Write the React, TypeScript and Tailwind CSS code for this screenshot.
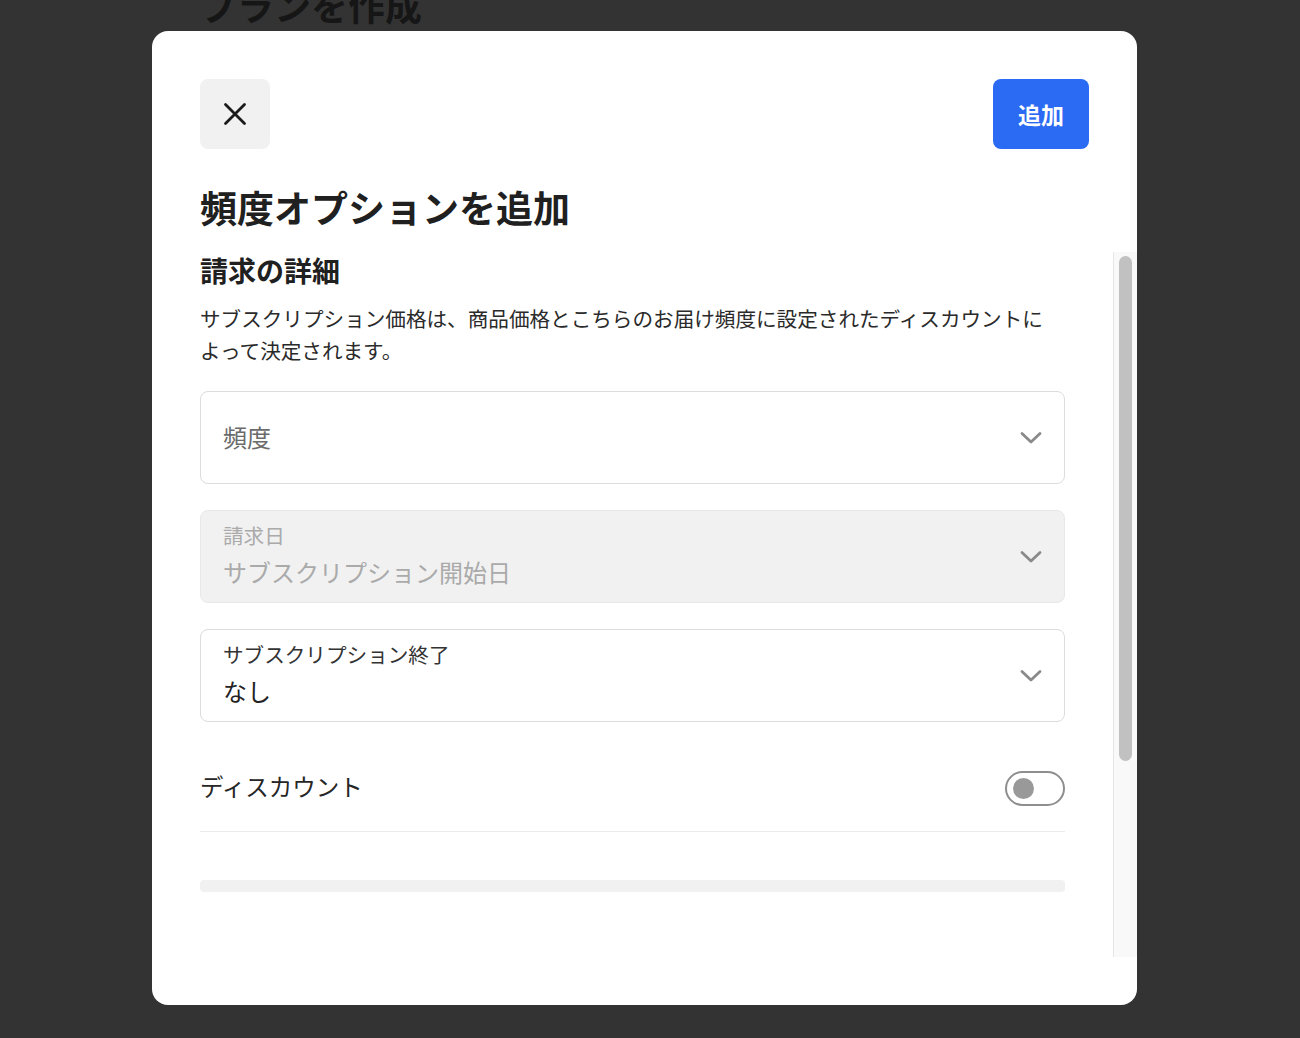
import { useState } from 'react';

const FONT = '"Noto Sans CJK JP", "Noto Sans", sans-serif';

function Chevron() {
  return (
    <svg width="22" height="14" viewBox="0 0 22 14" fill="none" className="shrink-0">
      <path d="M2 2.5L11 11L20 2.5" stroke="#8a8a8a" strokeWidth="2.8" strokeLinecap="round" strokeLinejoin="round" />
    </svg>
  );
}

export default function App() {
  const [discount, setDiscount] = useState(false);

  return (
    <div className="relative h-[1038px] w-full overflow-hidden bg-[#333333]" style={{ fontFamily: FONT }}>
      {/* page behind the overlay */}
      <div className="pl-[200px]">
        <h1 className="-mt-[17px] text-[37px] font-bold leading-[44px] text-[#161616]">プランを作成</h1>
      </div>

      {/* Modal */}
      <div className="absolute left-[152px] top-[31px] flex h-[974px] w-[985px] flex-col rounded-[16px] bg-white">
        {/* Header */}
        <div className="px-[48px] pt-[48px]">
          <div className="flex items-center justify-between">
            <button className="flex h-[70px] w-[70px] items-center justify-center rounded-[8px] bg-[#f1f1f1]">
              <svg width="24" height="24" viewBox="0 0 24 24" fill="none">
                <path d="M2.5 2.5L21.5 21.5M21.5 2.5L2.5 21.5" stroke="#1a1a1a" strokeWidth="2.8" strokeLinecap="round" />
              </svg>
            </button>
            <button className="flex h-[70px] w-[96px] items-center justify-center rounded-[8px] bg-[#2b6bf3] text-[23px] font-bold text-white">
              追加
            </button>
          </div>
          <h2 className="mt-[36px] text-[37px] font-bold leading-[44px] text-[#202020]">頻度オプションを追加</h2>
        </div>

        {/* Scroll area */}
        <div className="mt-[23px] flex h-[705px]">
          <div className="flex-1 overflow-hidden pl-[48px] pr-[48px]">
            <h3 className="text-[28px] font-bold leading-[36px] text-[#202020]">請求の詳細</h3>
            <p className="mt-[14px] max-w-[855px] text-[20.6px] leading-[32px] text-[#2a2a2a]">
              サブスクリプション価格は、商品価格とこちらのお届け頻度に設定されたディスカウントによって決定されます。
            </p>

            {/* 頻度 */}
            <div className="mt-[25px] flex h-[93px] items-center justify-between rounded-[8px] border-[1.5px] border-[#dcdcdc] bg-white pl-[22px] pr-[22px]">
              <span className="-mt-[2px] text-[24px] text-[#6b6b6b]">頻度</span>
              <Chevron />
            </div>

            {/* 請求日 (disabled) */}
            <div className="mt-[26px] flex h-[93px] items-center justify-between rounded-[8px] border-[1.5px] border-[#e8e8e8] bg-[#f1f1f1] pl-[22px] pr-[22px]">
              <div className="-mt-[5px] flex flex-col">
                <span className="text-[20.6px] leading-[26px] text-[#aaaaaa]">請求日</span>
                <span className="mt-[9px] text-[24px] leading-[30px] text-[#aaaaaa]">サブスクリプション開始日</span>
              </div>
              <Chevron />
            </div>

            {/* サブスクリプション終了 */}
            <div className="mt-[26px] flex h-[93px] items-center justify-between rounded-[8px] border-[1.5px] border-[#dcdcdc] bg-white pl-[22px] pr-[22px]">
              <div className="-mt-[5px] flex flex-col">
                <span className="text-[20.6px] leading-[26px] text-[#333333]">サブスクリプション終了</span>
                <span className="mt-[9px] text-[24px] leading-[30px] text-[#222222]">なし</span>
              </div>
              <Chevron />
            </div>

            {/* Discount */}
            <div className="mt-[24px] flex h-[86px] items-center justify-between border-b border-[#ececec]">
              <span className="-mt-[4px] text-[23.5px] text-[#262626]">ディスカウント</span>
              <button
                onClick={() => setDiscount(!discount)}
                className="flex h-[35px] w-[60px] items-center rounded-full border-[2.5px] border-[#8e8e8e] bg-white px-[6px]"
              >
                <span className="h-[21px] w-[21px] rounded-full bg-[#999999]" />
              </button>
            </div>

            <div className="mt-[48px] h-[12px] rounded-[4px] bg-[#f1f1f1]" />
          </div>

          {/* scrollbar */}
          <div className="flex w-[24px] shrink-0 justify-center border-l border-[#e6e6e6] bg-[#f9f9f9] pt-[4px]">
            <div className="h-[505px] w-[13px] rounded-full bg-[#c1c1c1]" />
          </div>
        </div>
      </div>
    </div>
  );
}
